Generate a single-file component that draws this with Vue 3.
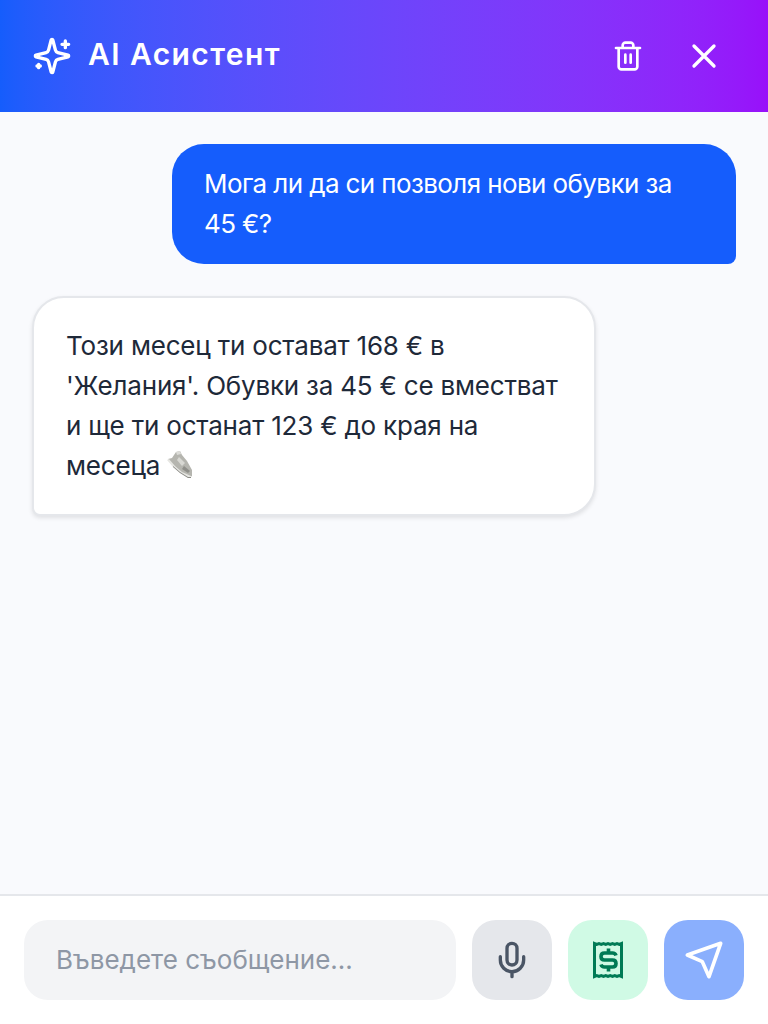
<script setup>
const placeholder = 'Въведете съобщение...'
</script>

<template>
  <div class="page" lang="bg">
    <header class="top">
      <div class="brand">
        <svg class="ico" width="40" height="40" viewBox="0 0 24 24"><path d="M9.937 15.5A2 2 0 0 0 8.5 14.063l-6.135-1.582a.5.5 0 0 1 0-.962L8.5 9.936A2 2 0 0 0 9.937 8.5l1.582-6.135a.5.5 0 0 1 .963 0L14.063 8.5A2 2 0 0 0 15.5 9.937l6.135 1.581a.5.5 0 0 1 0 .964L15.5 14.063a2 2 0 0 0-1.437 1.437l-1.582 6.135a.5.5 0 0 1-.963 0z"/><path d="M20 3v4M22 5h-4M4 17v2M5 18H3"/></svg>
        <h1>AI Асистент</h1>
      </div>
      <div class="actions">
        <button class="icon-btn" aria-label="Изтрий">
          <svg class="ico" width="32" height="32" viewBox="0 0 24 24"><path d="M3 6h18M19 6v14c0 1-1 2-2 2H7c-1 0-2-1-2-2V6M8 6V4c0-1 1-2 2-2h4c1 0 2 1 2 2v2M10 11v6M14 11v6"/></svg>
        </button>
        <button class="icon-btn" aria-label="Затвори">
          <svg class="ico" width="40" height="40" viewBox="0 0 24 24"><path d="M18 6 6 18M6 6l12 12"/></svg>
        </button>
      </div>
    </header>

    <main class="chat">
      <div class="bubble user">Мога ли да си позволя нови обувки за 45 €?</div>
      <div class="bubble bot">Този месец ти остават 168 € в 'Желания'. Обувки за 45 € се вместват и ще ти останат 123 € до края на месеца <svg class="shoe" width="25" height="27" viewBox="0 0 25 27"><path d="M1 8 5 7 9 1l4-1 2 4 5 6 5 9v6l-3 2-8-5-8-7z" fill="#b5b5af"/><path d="M9 1l4-1 1 3-4 1z" fill="#dcdcd8"/><path d="M12 6l6 6-3 3-5-6z" fill="#d8d8d3"/><path d="M17 15l6 5-2 2-6-4z" fill="#8f8f8a"/><path d="M0 9l2-1 6 7 7 6 9 4v2h-3l-8-5-7-6z" fill="#e6e6e2"/><path d="M6 16l7 6 8 5h3v-1l-3 0-8-5-7-6z" fill="#8a8a85"/></svg></div>
    </main>

    <footer class="composer">
      <input class="field" type="text" :placeholder="placeholder" />
      <button class="action mic" aria-label="Микрофон">
        <svg class="ico" width="40" height="40" viewBox="0 0 24 24"><path d="M12 2a3 3 0 0 0-3 3v7a3 3 0 0 0 6 0V5a3 3 0 0 0-3-3Z"/><path d="M19 10v2a7 7 0 0 1-14 0v-2M12 19v3"/></svg>
      </button>
      <button class="action receipt" aria-label="Разход">
        <svg class="rc" width="40" height="40" viewBox="0 0 40 40"><path d="M6.500 3.500v33l2.250-.8 2.250.8 2.250-.8 2.250.8 2.250-.8 2.250.8 2.250-.8 2.250.8 2.250-.8 2.250.8 2.250-.8 2.250.8v-33l-2.250.8-2.250-.8-2.250.8-2.250-.8-2.250.8-2.250-.8-2.250.8-2.250-.8-2.250.8-2.250-.8-2.250.8z"/><path class="dollar" d="M28 15.500q-.8-2.500-3.500-2.500h-8q-3.500 0-3.500 3.500t3.500 3.500h8q3.500 0 3.500 3.500t-3.500 3.500h-8q-2.700 0-3.500-2.500M20.500 8.500v4.500M20.500 27v4.500"/></svg>
      </button>
      <button class="action send" aria-label="Изпрати">
        <svg class="ico send-ico" width="40" height="40" viewBox="0 0 24 24"><path d="m22 2-7 20-4-9-9-4Z"/></svg>
      </button>
    </footer>
  </div>
</template>

<style>
html, body { margin: 0; background: #fff; }
</style>

<style scoped>
.page {
  width: 768px;
  height: 1024px;
  display: flex;
  flex-direction: column;
  background: #f9fafd;
  font-family: Inter, "Noto Sans", sans-serif;
  overflow: hidden;
}
.top {
  height: 112px;
  flex: none;
  box-sizing: border-box;
  padding: 0 36px 0 32px;
  display: flex;
  align-items: center;
  justify-content: space-between;
  background: linear-gradient(90deg in oklab, #155dfc, #9810fa);
  color: #fff;
}
.brand { display: flex; align-items: center; gap: 16px; }
h1 {
  margin: 0 0 4px;
  font-size: 30px;
  letter-spacing: 1.4px;
  font-weight: 600;
  line-height: 36px;
}
.ico {
  fill: none;
  stroke: currentColor;
  stroke-width: 2;
  stroke-linecap: round;
  stroke-linejoin: round;
  display: block;
}
.send-ico { stroke-width: 2.2; }
.actions { display: flex; align-items: center; gap: 20px; }
button {
  border: 0;
  padding: 0;
  background: none;
  color: inherit;
  display: flex;
  align-items: center;
  justify-content: center;
}
.icon-btn { width: 56px; height: 56px; }
.chat {
  flex: 1;
  display: flex;
  flex-direction: column;
  gap: 32px;
  padding: 32px;
}
.bubble {
  max-width: 564px;
  box-sizing: border-box;
  font-size: 26px;
  line-height: 40px;
  border-radius: 32px;
}
.user {
  align-self: flex-end;
  background: #155dfc;
  color: #fff;
  padding: 20px 32px;
  letter-spacing: -0.6px;
  border-bottom-right-radius: 8px;
}
.bot {
  align-self: flex-start;
  background: #fff;
  color: #1e2939;
  padding: 28px 32px;
  letter-spacing: -0.2px;
  border: 2px solid #e5e7eb;
  border-bottom-left-radius: 8px;
  box-shadow: 0 2px 4px rgba(0, 0, 0, 0.1);
}
.shoe { vertical-align: -3px; }
.composer {
  flex: none;
  display: flex;
  gap: 16px;
  padding: 24px;
  background: #fff;
  border-top: 2px solid #e5e7eb;
}
.field {
  flex: 1;
  min-width: 0;
  height: 80px;
  box-sizing: border-box;
  border: 0;
  outline: 0;
  padding: 0 32px 2px;
  border-radius: 24px;
  background: #f3f4f6;
  font: inherit;
  font-size: 26px;
  color: #1e2939;
}
.field::placeholder { color: #8e97a5; opacity: 1; }
.action { width: 80px; height: 80px; flex: none; border-radius: 24px; }
.mic { background: #e5e7eb; color: #4a5565; }
.receipt { background: #d0fae5; }
.rc { fill: none; stroke: #007a55; stroke-width: 3; stroke-linejoin: miter; display: block; }
.dollar { stroke-width: 3.6; stroke-linecap: butt; }
.send { background: #8aaffd; color: #fff; }
</style>
